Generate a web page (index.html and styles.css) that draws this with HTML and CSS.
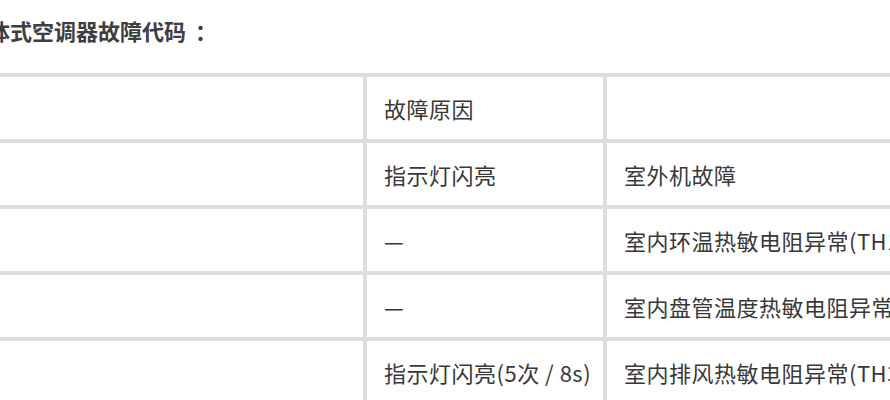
FILE: index.html
```html
<!DOCTYPE html>
<html lang="zh-CN">
<head>
<meta charset="utf-8">
<title>分体式空调器故障代码</title>
<link rel="stylesheet" href="styles.css">
</head>
<body>
<div class="page">
  <h3 class="title">分体式空调器故障代码<span class="colon">：</span></h3>
  <div class="codes">
    <div class="cell"></div>
    <div class="cell">故障原因</div>
    <div class="cell"></div>

    <div class="cell"></div>
    <div class="cell">指示灯闪亮</div>
    <div class="cell">室外机故障</div>

    <div class="cell"></div>
    <div class="cell">—</div>
    <div class="cell">室内环温热敏电阻异常(TH1)</div>

    <div class="cell"></div>
    <div class="cell">—</div>
    <div class="cell">室内盘管温度热敏电阻异常(TH2)</div>

    <div class="cell"></div>
    <div class="cell">指示灯闪亮(5次 / 8s)</div>
    <div class="cell">室内排风热敏电阻异常(TH3)</div>
  </div>
</div>
</body>
</html>
```

FILE: styles.css
```css
html, body {
  margin: 0;
  padding: 0;
  background: #ffffff;
  overflow: hidden;
}

body {
  width: 890px;
  height: 400px;
  font-family: "Noto Sans CJK SC", "Noto Sans", sans-serif;
  color: #383838;
}

.page {
  margin-left: -34px;
  width: 1300px;
}

.title {
  margin: 0;
  padding-top: 15px;
  height: 30px;
  line-height: 30px;
  font-size: 22px;
  font-weight: bold;
  color: #3e3e3e;
  margin-bottom: 28px;
}

.colon {
  margin-left: 9px;
}

.codes {
  display: grid;
  grid-template-columns: 393px 236px 420px;
  grid-auto-rows: 62px;
  gap: 4px;
  padding: 4px;
  background: #dddddd;
  width: max-content;
}

.cell {
  background: #ffffff;
  display: flex;
  align-items: center;
  padding-left: 17px;
  font-size: 22px;
  letter-spacing: 0.5px;
  white-space: nowrap;
  overflow: hidden;
}
```
